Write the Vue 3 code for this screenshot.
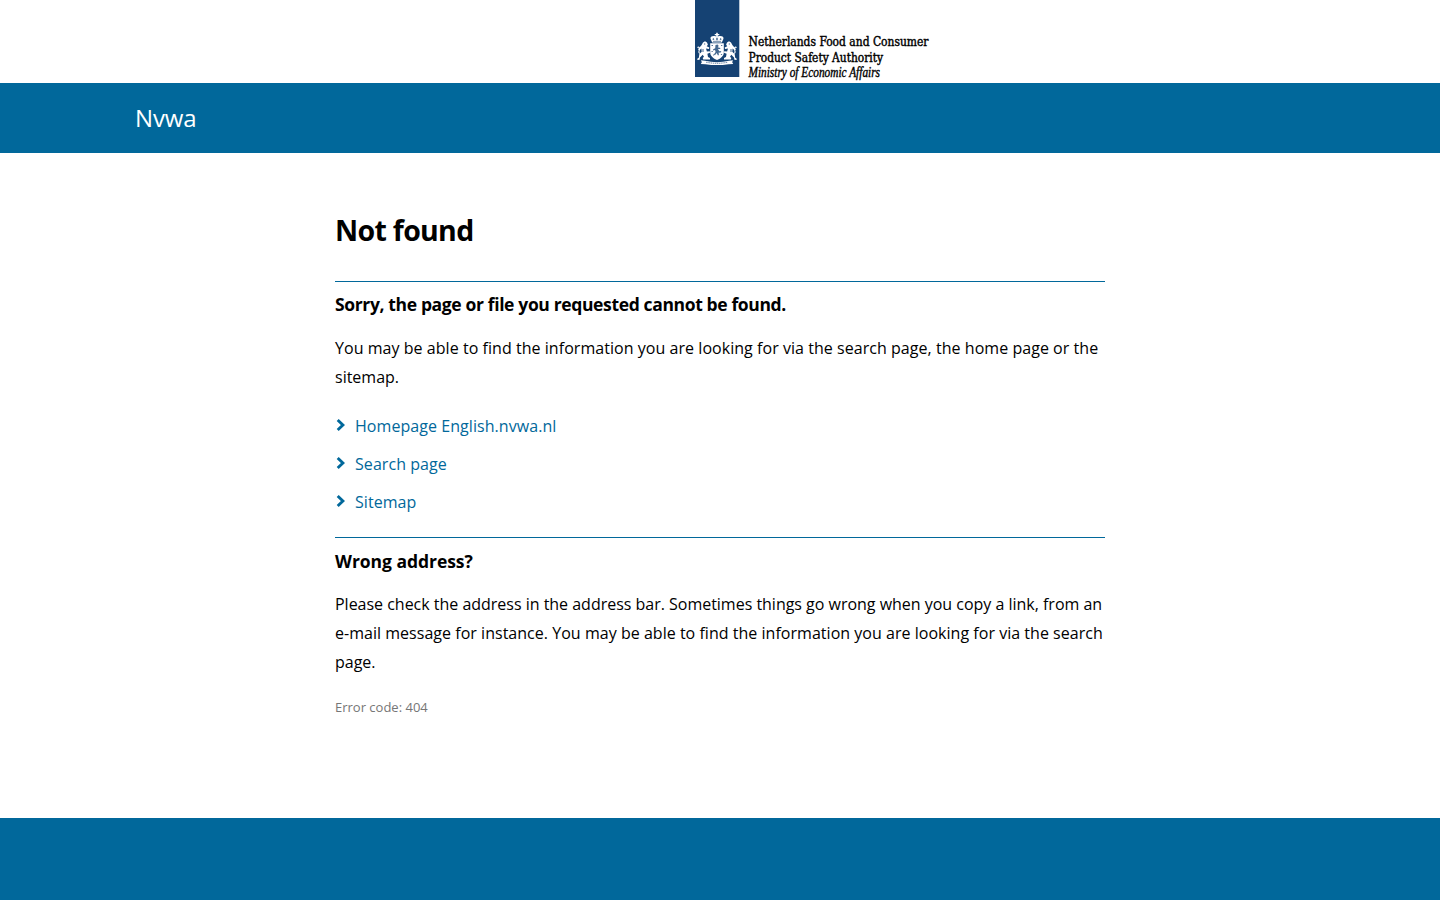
<script setup>
const links = ['Homepage English.nvwa.nl', 'Search page', 'Sitemap']
</script>

<template>
  <div class="page">
    <header class="logo">
      <svg width="240" height="83" viewBox="0 0 240 83" role="img">
        <rect width="44.3" height="77" fill="#154273" />
        <g fill="#fff">
          <!-- crown -->
          <path d="M21.200 32.800h1.600v1.300h1.500v1.100h-1.500v1.200c3.600-1 6.400.2 5.600 2.600l-1.600 3.400H17.200l-1.600-3.400c-.8-2.400 2-3.600 5.600-2.600v-1.200h-1.500v-1.100h1.500z" />
          <!-- shield -->
          <path d="M15.200 43.300h13.600v9.200c0 4-4 6.300-6.800 7.600-2.800-1.300-6.800-3.600-6.800-7.600z" />
          <!-- supporting lions -->
          <g id="lion">
            <path d="M8 42.500l2-1.200 2 1.200.9 2.300-1.200 1.400 2.600 1.300-.3 1.600-3-.6.9 3 2.900-.3.200 1.500-2.600 1 .6 3.300 2 .9v1.500H8.200l-.5-1.500 1.300-1.200-1.300-2-2.700 2.800-.4 2.300-2.300.2.200-1.500 1.300-.7.500-3.600 2.400-2.500-.3-3.300-1.700 1.600-1.800-.5.900-1.300 2.700-3z" />
            <path d="M5.500 53.500C2 53 5.500 49.500 4.300 47.800c-.6-1-1.300-.7-1.800-.2" fill="none" stroke="#fff" stroke-width="1.100" />
          </g>
          <use href="#lion" transform="translate(44 0) scale(-1 1)" />
          <!-- motto ribbon -->
          <path d="M6 60.200l4 .5c8 1.900 16 1.900 24 0l4-.5-.8 2 1 1.700-4.700.3c-8 1.200-15 1.200-23 0l-4.700-.3 1-1.700z" />
        </g>
        <g fill="#154273">
          <path d="M17.300 39.200l2 .8-.8-2zM21.400 37.800h1.200v2.400h-1.200zM26.700 39.200l-2 .8.800-2z" />
          <path d="M18 40.900h8v.6h-8z" />
          <path d="M20.500 45l2.200-.6 1 1.600-1 1.300 2.600.7-.1 1.100-2.300-.1 1.500 2.300 2-.2-1 1.700-1.800-.2.300 2.700h-1.100l-1.100-2.400-1.800 2.300-1-.8 1.700-2.500-.6-2-2 .5.2-1.200 2-1z" opacity=".8" />
          <path d="M16.500 45h1.500v1h-1.500zM26 45h1.300v1H26zM16.500 51h1.300v1h-1.300zM25.900 54h1.200v1h-1.200zM18 54.500h1v1h-1z" opacity=".7" />
          <path d="M9.200 43.600h1v1h-1zM33.800 43.600h1v1h-1zM7.600 49h.8v3h-.8zM35.600 49h.8v3h-.8z" />
        </g>
        <path d="M11 62.200c8 1.500 14 1.500 22 0" fill="none" stroke="#154273" stroke-width=".6" stroke-dasharray="1.500 .7" />
        <g fill="#000" stroke="#000">
          <text class="org" x="53.500" y="46" textLength="180" lengthAdjust="spacingAndGlyphs">Netherlands Food and Consumer</text>
          <text class="org" x="53.500" y="62" textLength="134.500" lengthAdjust="spacingAndGlyphs">Product Safety Authority</text>
          <text class="ministry" x="53.500" y="77.400" textLength="131.500" lengthAdjust="spacingAndGlyphs">Ministry of Economic Affairs</text>
        </g>
      </svg>
    </header>

    <div class="bar"><span>Nvwa</span></div>

    <main>
      <h1>Not found</h1>
      <section>
        <h2>Sorry, the page or file you requested cannot be found.</h2>
        <p class="intro">
          <span class="line a1">You may be able to find the information you are looking for via the search page, the home page or the</span>
          <span class="line">sitemap.</span>
        </p>
        <ul>
          <li v-for="link in links" :key="link">
            <svg width="10" height="14" viewBox="0 0 10 14"><path d="M1.700 2l5.200 5-5.200 5" fill="none" stroke="#01689b" stroke-width="2.900" /></svg>
            <a>{{ link }}</a>
          </li>
        </ul>
      </section>
      <section>
        <h2 class="wrong">Wrong address?</h2>
        <p>
          <span class="line a3">Please check the address in the address bar. Sometimes things go wrong when you copy a link, from an</span>
          <span class="line a2">e-mail message for instance. You may be able to find the information you are looking for via the search</span>
          <span class="line">page.</span>
        </p>
      </section>
      <p class="code">Error code: 404</p>
    </main>

    <footer></footer>
  </div>
</template>

<style>
body { margin: 0; background: #fff; }
</style>

<style scoped>
.page { height: 900px; display: flex; flex-direction: column; overflow: hidden; font-family: "Open Sans", "Noto Sans", sans-serif; font-size: 16px; line-height: 29px; color: #000; }
.logo { height: 83px; padding-left: 695px; flex: none; }
.logo svg { display: block; }
.org { font: 12px "DejaVu Serif Condensed", "DejaVu Serif", serif; stroke-width: .4; }
.ministry { font: italic 14px "Liberation Serif", serif; stroke-width: .4; }
.bar { height: 70px; flex: none; box-sizing: border-box; padding-left: 135px; background: #01689b; color: #fff; font-size: 24px; line-height: 70px; letter-spacing: -.1px; }
main { width: 770px; margin: 0 auto; flex: 1; }
h1 { margin: 57px 0 30px; font-size: 28.500px; line-height: 41px; letter-spacing: -.7px; }
section { border-top: 1px solid #01689b; }
h2 { margin: 0; padding-top: 8px; font-size: 17.500px; line-height: 29px; letter-spacing: -.36px; white-space: nowrap; }
h2.wrong { letter-spacing: -.04px; padding-top: 9px; }
p { margin: 14px 0 0; }
p.intro { margin-top: 15px; }
.line { display: block; white-space: nowrap; }
.a1 { letter-spacing: .045px; }
.a2 { letter-spacing: .028px; }
.a3 { letter-spacing: -.015px; }
ul { list-style: none; margin: 20px 0 20px; padding: 0; display: flex; flex-direction: column; gap: 9px; }
li { display: flex; align-items: center; gap: 9px; padding-left: 1px; color: #01689b; letter-spacing: .06px; }
li svg { margin-top: -4px; }
.code { font-size: 13px; line-height: 20px; margin-top: 20px; color: #767676; }
footer { height: 82px; flex: none; background: #01689b; }
</style>
